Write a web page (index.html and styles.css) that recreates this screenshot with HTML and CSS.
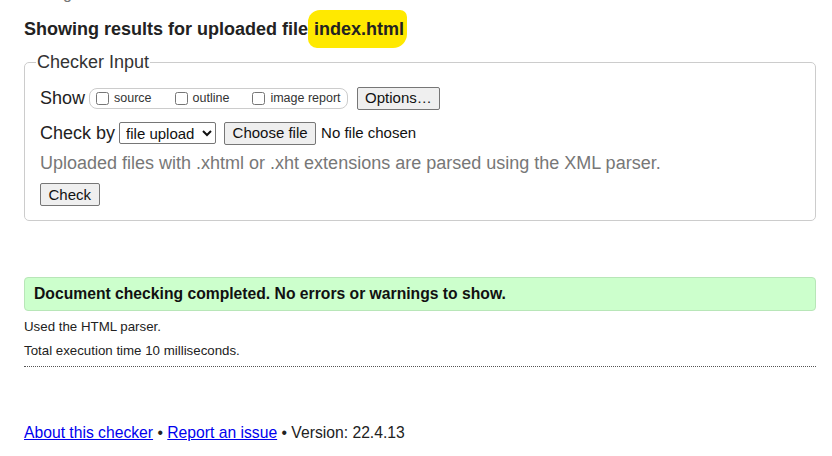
FILE: index.html
```html
<!DOCTYPE html>
<html>
<head>
<meta charset="utf-8">
<link rel="stylesheet" href="styles.css">
</head>
<body>
<div class="page">
  <div class="clipped">g</div>
  <h2 class="heading">Showing results for uploaded file <span class="hl">index.html</span></h2>
  <fieldset class="input">
    <legend>Checker Input</legend>
    <div class="row">
      <span class="label">Show</span>
      <span class="show-box">
        <label class="opt"><input type="checkbox">source</label>
        <label class="opt"><input type="checkbox">outline</label>
        <label class="opt"><input type="checkbox">image report</label>
      </span>
      <button class="btn">Options…</button>
    </div>
    <div class="row">
      <span class="label">Check by</span>
      <select class="sel"><option>file upload</option></select>
      <span class="file"><button class="btn">Choose file</button><span class="nofile">No file chosen</span></span>
    </div>
    <p class="note">Uploaded files with .xhtml or .xht extensions are parsed using the XML parser.</p>
    <div class="row check-row"><button class="btn">Check</button></div>
  </fieldset>
  <div class="success">Document checking completed. No errors or warnings to show.</div>
  <p class="details">Used the HTML parser.</p>
  <p class="details">Total execution time 10 milliseconds.</p>
  <hr class="dots">
  <p class="footer"><a href="#">About this checker</a> • <a href="#">Report an issue</a> • Version: 22.4.13</p>
</div>
</body>
</html>
```

FILE: styles.css
```css
* { box-sizing: border-box; }
html, body { margin: 0; padding: 0; background: #fff; }
body { font-family: "Liberation Sans", Arial, sans-serif; color: #222; }
.page { padding: 0 16px 0 24px; height: 456px; overflow: hidden; position: relative; }
.clipped { position: absolute; left: 63px; top: -14px; font-size: 16px; line-height: 16px; color: #777; }
.heading { margin: 0; padding-top: 17px; font-size: 18px; font-weight: bold; color: #222; line-height: 24px; }
.hl { background: #ffe900; border-radius: 12px 7px 14px 9px; padding: 9px 3px 9px 6px; margin-left: -5px; }
.input { margin: 11px 0 0 0; padding: 9px 15px 14px 15px; border: 1px solid #ccc; border-radius: 5px; min-width: 0; }
.input legend { font-size: 18px; color: #333; padding: 0 1px; margin-left: -4px; line-height: 20px; }
.row { display: flex; align-items: center; margin-top: 4px; font-size: 18px; line-height: 26px; color: #222; }
.row + .row { margin-top: 9px; }
.label { margin-right: 4px; }
.show-box { display: inline-flex; align-items: center; gap: 23px; border: 1px solid #ccc; border-radius: 8px; padding: 0 6px 0 6px; height: 21px; margin-right: 9px; }
.opt { display: inline-flex; align-items: center; font-size: 12.5px; color: #333; }
.opt input { margin: 0 5px 0 0; width: 13px; height: 13px; }
.btn { font-family: "Liberation Sans", Arial, sans-serif; font-size: 15px; color: #111; background: #efefef; border: 1px solid #767676; border-radius: 2px; padding: 0 7.5px; height: 23px; line-height: 20px; }
.sel { font-family: "Liberation Sans", Arial, sans-serif; font-size: 15px; width: 97px; height: 22px; margin-right: 8px; border: 1px solid #767676; border-radius: 2px; background: #fff; color: #111; padding: 0 0 0 2px; }
.file { display: inline-flex; align-items: center; }
.nofile { font-size: 15px; margin-left: 5px; color: #111; }
.note { margin: 6px 0 0 0; font-size: 18px; color: #777; line-height: 22px; }
.check-row { margin-top: 9px; }
.success { margin-top: 56px; background: #ccffcc; border: 1px solid #b8e6b8; border-radius: 4px; padding: 0 9px; height: 34px; line-height: 32px; font-size: 15.7px; font-weight: bold; color: #111; }
.details { margin: 8px 0 0 0; font-size: 13.3px; line-height: 16px; color: #222; }
.details + .details { margin-top: 8px; }
.dots { margin: 7px 0 0 0; border: 0; border-top: 1px dotted #555; height: 0; }
.footer { margin: 56px 0 0 0; font-size: 15.7px; color: #222; line-height: 20px; }
.footer a { color: #0000ee; }
```
